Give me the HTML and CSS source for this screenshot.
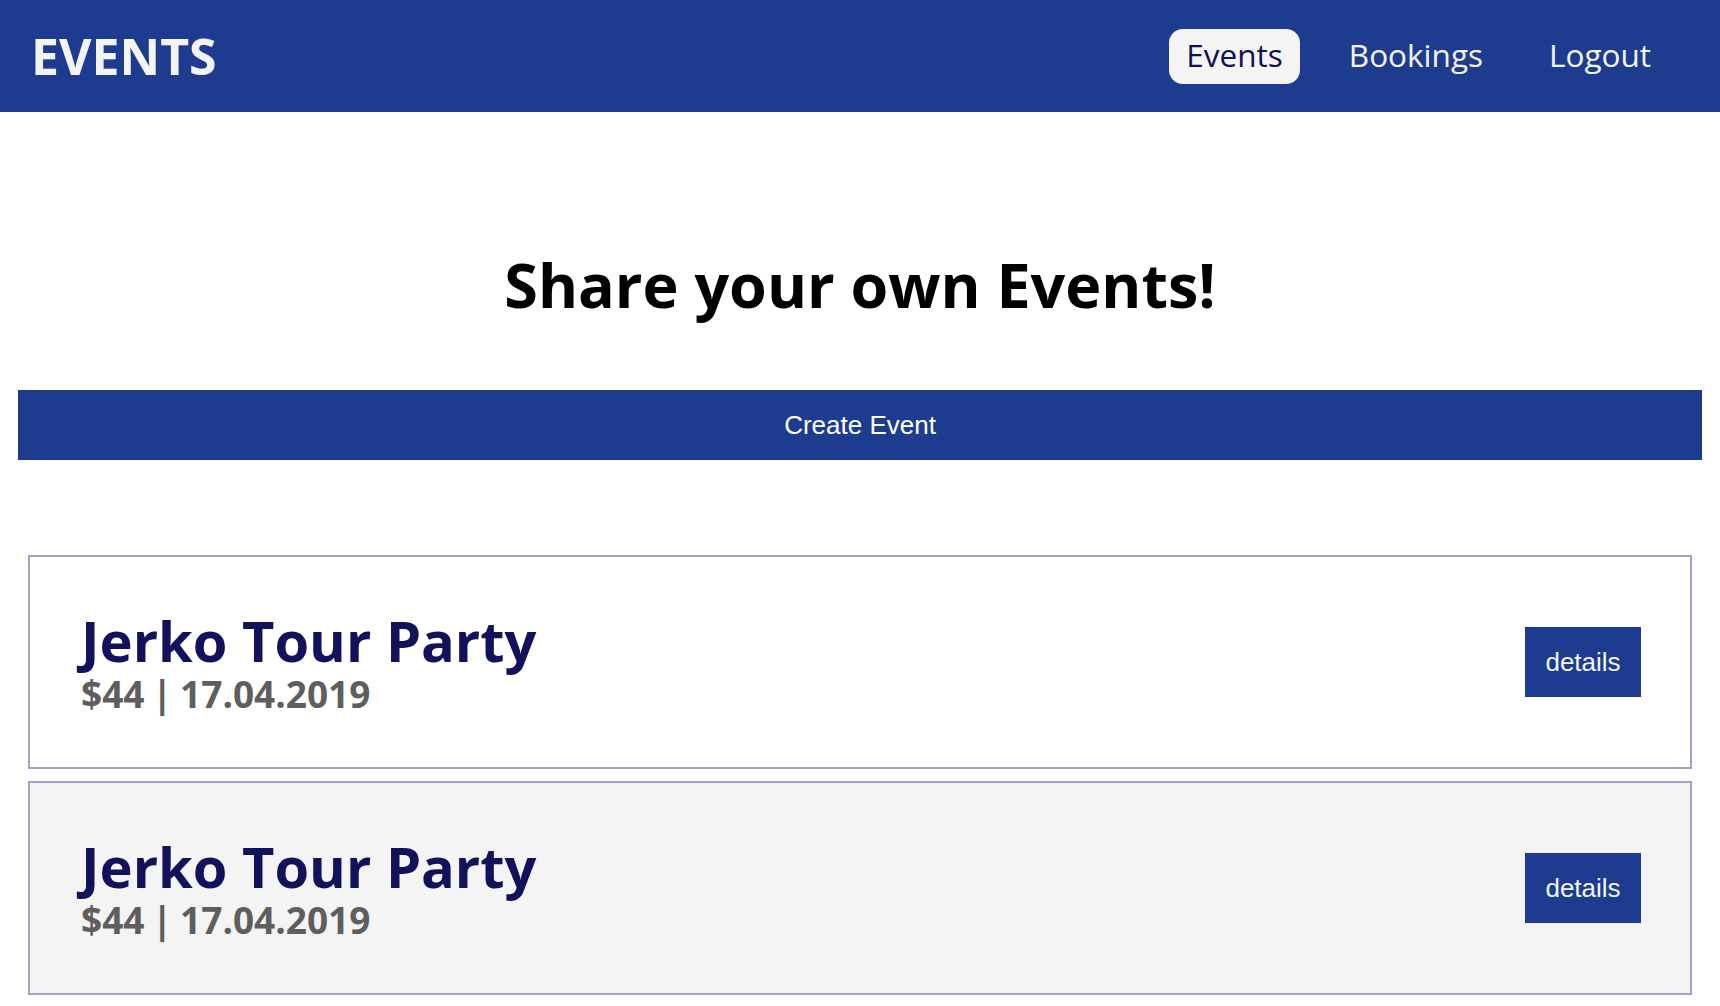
FILE: index.html
```html
<!DOCTYPE html>
<html lang="en">
<head>
<meta charset="utf-8">
<title>Events</title>
<link rel="stylesheet" href="styles.css">
</head>
<body>
<header class="topbar">
  <div class="logo">EVENTS</div>
  <nav class="nav">
    <a class="nav-link active" href="#">Events</a>
    <a class="nav-link" href="#">Bookings</a>
    <a class="nav-link" href="#">Logout</a>
  </nav>
</header>
<main class="main">
  <h1 class="headline">Share your own Events!</h1>
  <button class="btn create-btn">Create Event</button>
  <ul class="event-list">
    <li class="event-card">
      <div class="event-info">
        <h2 class="event-title">Jerko Tour Party</h2>
        <p class="event-meta">$44 | 17.04.2019</p>
      </div>
      <button class="btn details-btn">details</button>
    </li>
    <li class="event-card alt">
      <div class="event-info">
        <h2 class="event-title">Jerko Tour Party</h2>
        <p class="event-meta">$44 | 17.04.2019</p>
      </div>
      <button class="btn details-btn">details</button>
    </li>
  </ul>
</main>
</body>
</html>
```
FILE: styles.css
```css
* { box-sizing: border-box; }
html, body { margin: 0; padding: 0; }
body {
  background: #ffffff;
  font-family: "Open Sans", "Noto Sans", sans-serif;
  color: #000;
}
.topbar {
  height: 112px;
  background: #1e3c8f;
  display: flex;
  align-items: center;
  justify-content: space-between;
  padding: 0 52px 0 31px;
}
.logo {
  color: #f4f4f4;
  font-weight: 700;
  font-size: 50px;
  line-height: 1;
}
.nav {
  display: flex;
  align-items: center;
  gap: 32px;
}
.nav-link {
  display: block;
  height: 55px;
  line-height: 51px;
  padding: 0 17px 4px;
  font-size: 31.5px;
  color: #f4f4f4;
  text-decoration: none;
  border-radius: 14px;
}
.nav-link.active {
  background: #f4f4f4;
  color: #10105a;
}
.main {
  padding-top: 131px;
}
.headline {
  margin: 0;
  text-align: center;
  font-size: 61px;
  font-weight: 700;
  line-height: 83px;
}
.btn {
  font-family: "Liberation Sans", Arial, sans-serif;
  font-size: 26px;
  color: #f4f4f4;
  background: #1e3c8f;
  border: none;
  cursor: pointer;
  line-height: 30px;
  padding: 20px;
}
.create-btn {
  display: block;
  width: calc(100% - 36px);
  margin: 64px 18px 0;
  color: #ffffff;
}
.event-list {
  list-style: none;
  margin: 95px 28px 0;
  padding: 0;
  display: flex;
  flex-direction: column;
  gap: 12px;
}
.event-card {
  display: flex;
  align-items: center;
  justify-content: space-between;
  border: 2px solid #9ea3c7;
  background: #ffffff;
  padding: 51px 49px 51px 51px;
}
.event-card.alt {
  background: #f4f4f4;
}
.event-info {
  display: flex;
  flex-direction: column;
}
.event-title {
  margin: 0;
  font-size: 56px;
  line-height: 64px;
  font-weight: 700;
  color: #11115c;
}
.event-meta {
  margin: 0;
  font-size: 37px;
  line-height: 44px;
  font-weight: 700;
  color: #5e5e5e;
  word-spacing: -2px;
}
.details-btn {
  padding: 20px;
  width: 116px;
}
```
